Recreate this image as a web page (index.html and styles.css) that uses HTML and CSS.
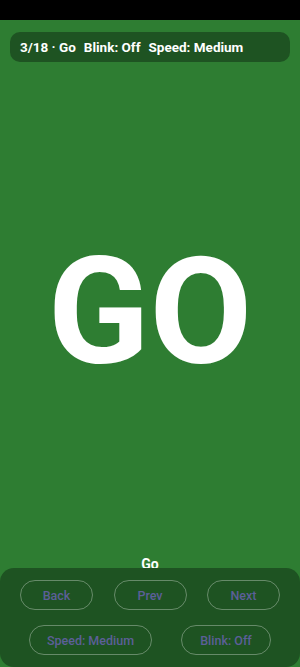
FILE: index.html
```html
<!DOCTYPE html>
<html lang="en">
<head>
    <meta charset="UTF-8">
    <meta name="viewport" content="width=device-width, initial-scale=1.0">
    <title>Signal</title>
    <link rel="stylesheet" href="styles.css">
</head>
<body>
    <div class="status-bar"></div>

    <div class="screen">
        <!-- Info pill -->
        <div class="info-bar">
            <span>3/18 · Go</span>
            <span>Blink: Off</span>
            <span>Speed: Medium</span>
        </div>

        <!-- Big word -->
        <div class="word">GO</div>

        <p class="caption">Go</p>

        <!-- Controls -->
        <div class="controls">
            <div class="row row-three">
                <button class="ctl-button">Back</button>
                <button class="ctl-button">Prev</button>
                <button class="ctl-button">Next</button>
            </div>
            <div class="row row-two">
                <button class="ctl-button speed-button">Speed: Medium</button>
                <button class="ctl-button blink-button">Blink: Off</button>
            </div>
        </div>
    </div>
</body>
</html>
```

FILE: styles.css
```css
* {
    box-sizing: border-box;
}

html, body {
    margin: 0;
    padding: 0;
    height: 100%;
}

body {
    background-color: #2e7d32;
    font-family: Roboto, 'Noto Sans', sans-serif;
    display: flex;
    flex-direction: column;
    overflow: hidden;
}

.status-bar {
    height: 20px;
    background-color: #000000;
    flex-shrink: 0;
}

.screen {
    flex: 1;
    display: flex;
    flex-direction: column;
}

.info-bar {
    margin: 12px 10px 0;
    height: 30px;
    border-radius: 10px;
    background-color: #1e5322;
    color: #ffffff;
    font-size: 13.5px;
    font-weight: 700;
    display: flex;
    align-items: center;
    gap: 8px;
    padding: 0 10px;
    white-space: nowrap;
}

.word {
    flex: 1;
    display: flex;
    align-items: center;
    justify-content: center;
    color: #ffffff;
    font-size: 149px;
    font-weight: 700;
    line-height: 1;
    padding-top: 6px;
}

.caption {
    margin: 0;
    text-align: center;
    color: #ffffff;
    font-size: 14px;
    font-weight: 700;
    line-height: 16px;
    margin-bottom: -4px;
}

.controls {
    background-color: #1e5322;
    border-radius: 14px;
    padding: 12px 20px 12px;
    display: flex;
    flex-direction: column;
    gap: 15px;
}

.row {
    display: flex;
    justify-content: space-between;
}

.row-two {
    padding: 0 9px;
}

.ctl-button {
    height: 30px;
    border-radius: 15px;
    border: 1px solid rgba(255, 255, 255, 0.32);
    background-color: transparent;
    color: #5c5f98;
    font-family: Roboto, 'Noto Sans', sans-serif;
    font-size: 12.5px;
    font-weight: 500;
    padding: 0;
}

.row-three .ctl-button {
    width: 73px;
}

.speed-button {
    width: 123px;
}

.blink-button {
    width: 90px;
}
```
